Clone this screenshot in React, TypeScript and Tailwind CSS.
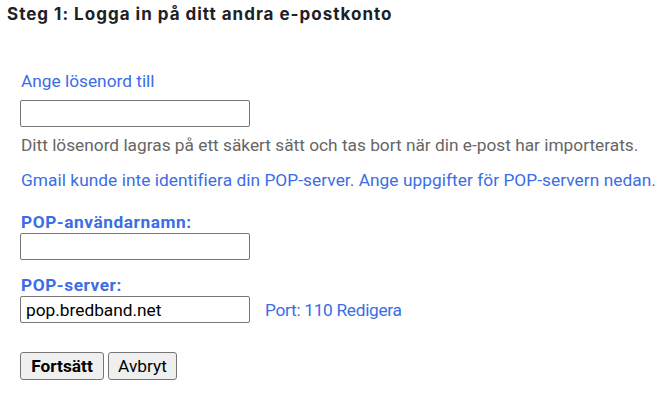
export default function App() {
  const blue = 'text-[#3b6de6]';
  const field =
    'w-[230px] h-[27px] border border-[#767676] rounded-[2px] px-[5px] text-[17.3px] text-black bg-white outline-none';
  const btn =
    'h-[28px] border border-[#767676] rounded-[3px] bg-[#efefef] text-black text-[17.3px] leading-[20px] flex items-center justify-center';
  return (
    <div className="w-[667px] h-[402px] bg-white font-['Roboto',sans-serif] text-[17.3px] leading-[20px]">
      <h2 className="pl-[7px] pt-[3px] font-['Inter',sans-serif] text-[17px] leading-[22px] tracking-[1px] font-bold text-[#202124]">
        Steg 1: Logga in på ditt andra e-postkonto
      </h2>

      <div className="pl-[20px] pt-[46px] flex flex-col items-start">
        <div className={`${blue} pl-px`}>Ange lösenord till</div>
        <input type="password" className={`mt-[9px] ${field}`} />
        <p className="mt-[8px] pl-px text-[#666666]">
          Ditt lösenord lagras på ett säkert sätt och tas bort när din e-post har importerats.
        </p>
        <p className={`mt-[15px] pl-px tracking-[0.05px] ${blue}`}>
          Gmail kunde inte identifiera din POP-server. Ange uppgifter för POP-servern nedan.
        </p>

        <label className={`mt-[22px] pl-px font-bold tracking-[0.55px] ${blue}`}>POP-användarnamn:</label>
        <input type="text" className={`mt-[1px] ${field}`} />

        <label className={`mt-[15px] pl-px font-bold tracking-[0.55px] ${blue}`}>POP-server:</label>
        <div className="mt-[1px] flex items-center gap-[15px]">
          <input type="text" defaultValue="pop.bredband.net" className={field} />
          <span className={`tracking-[-0.3px] ${blue}`}>Port: 110 Redigera</span>
        </div>

        <div className="mt-[29px] flex gap-[4px]">
          <button className={`${btn} w-[84px] font-bold`}>Fortsätt</button>
          <button className={`${btn} w-[69px]`}>Avbryt</button>
        </div>
      </div>
    </div>
  );
}
